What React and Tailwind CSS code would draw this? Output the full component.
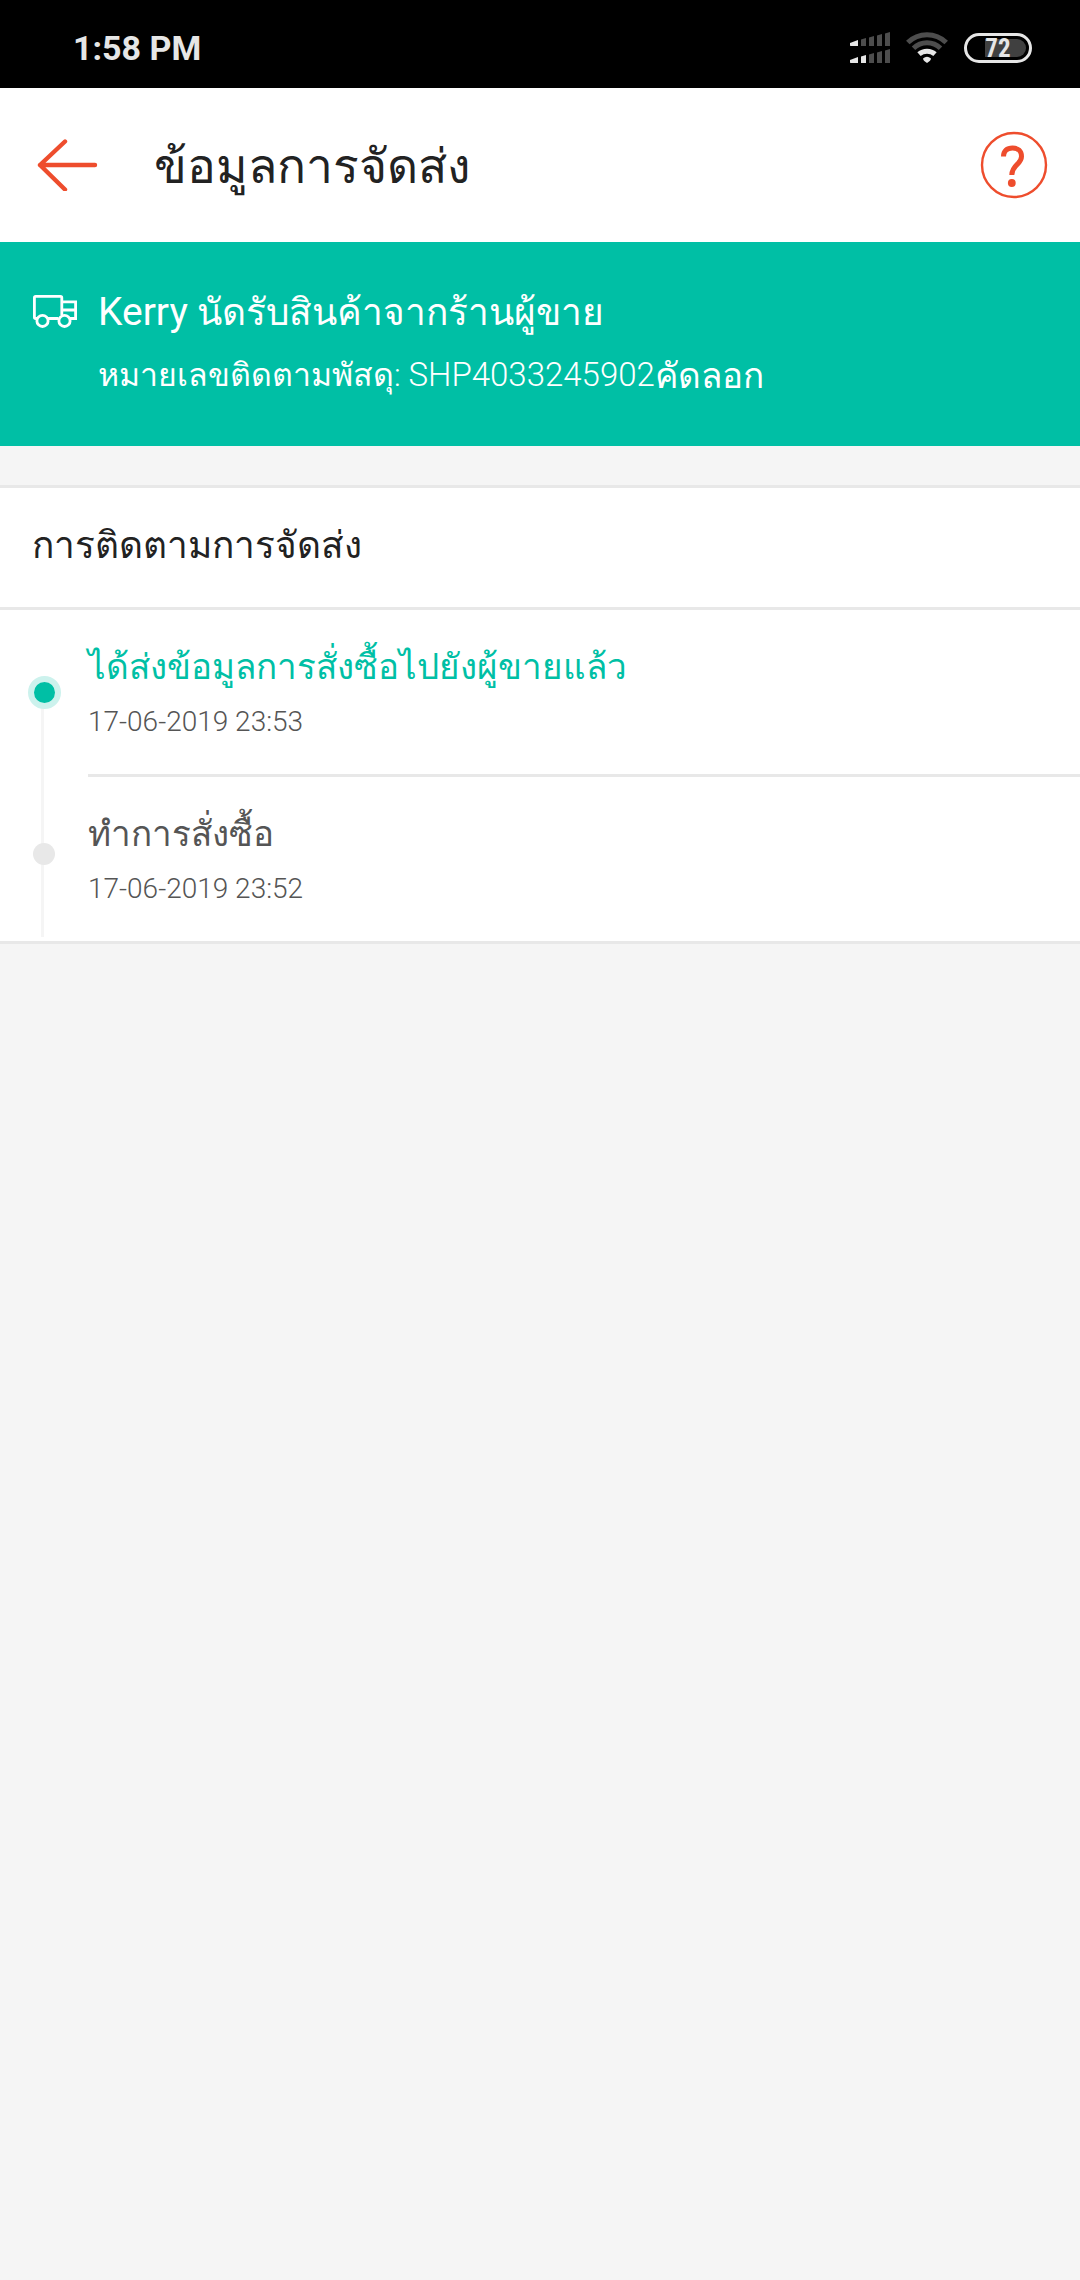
const events = [
  { title: 'ได้ส่งข้อมูลการสั่งซื้อไปยังผู้ขายแล้ว', time: '17-06-2019 23:53', current: true },
  { title: 'ทำการสั่งซื้อ', time: '17-06-2019 23:52', current: false },
];

function SignalIcon() {
  return (
    <svg width="40" height="32" viewBox="0 0 40 32" fill="#4d4d4d" aria-hidden="true">
      <path d="M0 11L8 8V14H0.500Q0 14 0 13Z" fill="#e6e6e6" />
      <path d="M11 7.500L16 6V14H11Z" />
      <path d="M19 5.500L24 4V14H19Z" />
      <path d="M27 3.500L32 2V14H27Z" />
      <path d="M35 1.500L40 0V14H35Z" />
      <path d="M0 28L8 25V31H0.500Q0 31 0 30Z" fill="#e6e6e6" />
      <path d="M11 24.500L16 23V31H11Z" fill="#e6e6e6" />
      <path d="M19 22.500L24 21V31H19Z" />
      <path d="M27 20.500L32 19V31H27Z" />
      <path d="M35 18.500L40 17V31H35Z" />
    </svg>
  );
}

function WifiIcon() {
  return (
    <svg width="42" height="32" viewBox="0 0 42 32" fill="none" strokeWidth="5" aria-hidden="true">
      <path d="M1.800 10.500A27.500 27.500 0 0 1 40.200 10.500" stroke="#4d4d4d" />
      <path d="M7.500 16.300A19.500 19.500 0 0 1 34.500 16.300" stroke="#4d4d4d" />
      <path d="M13 22.200A12 12 0 0 1 29 22.200" stroke="#e6e6e6" />
      <path d="M17 26.500Q21 22.800 25 26.500Q25 28.500 21 31Q17 28.500 17 26.500Z" fill="#e6e6e6" />
    </svg>
  );
}

function TruckIcon() {
  return (
    <svg width="46" height="34" viewBox="0 0 46 34" fill="none" stroke="#fff" strokeWidth="2.800" className="shrink-0" aria-hidden="true">
      <path d="M5 23.500H3.700Q2.400 23.500 2.400 22.200V2.700Q2.400 1.400 3.700 1.400H28.500Q29.800 1.400 29.800 2.700V20M16 23.500H26.500" />
      <path d="M30 6.900H43.600V23.500H38M30 15H43.600" />
      <circle cx="10.500" cy="25.900" r="5.600" />
      <circle cx="32.500" cy="25.900" r="5.600" />
    </svg>
  );
}

function StatusBar() {
  return (
    <div className="flex h-22 items-center justify-between bg-black pr-12 pl-[73px] pt-2">
      <span className="text-[34px] leading-10 font-bold text-[#e6e6e6]">1:58 PM</span>
      <div className="flex items-center gap-4">
        <SignalIcon />
        <WifiIcon />
        <div className="flex h-[30px] w-[68px] items-center justify-center rounded-full border-3 border-[#e6e6e6] p-[3px]">
          <div className="flex h-full w-full items-center justify-center rounded-full bg-linear-to-r from-black from-27% to-[#404040] to-27%">
            <span className="font-['Roboto_Condensed',Roboto,sans-serif] text-[25px] leading-none font-bold text-[#e6e6e6]">72</span>
          </div>
        </div>
      </div>
    </div>
  );
}

function Header() {
  return (
    <header className="flex h-[154px] items-center bg-white pr-8 pl-9">
      <button type="button" aria-label="ย้อนกลับ">
        <svg width="62" height="52" viewBox="0 0 62 52" fill="none" stroke="#ee4d2d" strokeWidth="4.400" strokeLinecap="round" strokeLinejoin="round">
          <path d="M59 26H4M29 2.500L4 26L29 50.500" />
        </svg>
      </button>
      <h1 className="ml-14 flex-1 pt-1 text-[48px] leading-16 text-[#222]">ข้อมูลการจัดส่ง</h1>
      <button type="button" aria-label="ช่วยเหลือ">
        <svg width="68" height="68" viewBox="0 0 68 68" fill="none" stroke="#ee4d2d">
          <circle cx="34" cy="34" r="32" strokeWidth="2.400" />
          <path d="M23.500 25.500C23.500 20 27 17 32.500 17C38 17 41.500 20 41.500 25.500C41.500 33.500 32 33.500 31.800 44" strokeWidth="5" />
          <circle cx="31.800" cy="52" r="3.900" fill="#ee4d2d" stroke="none" />
        </svg>
      </button>
    </header>
  );
}

function CarrierBanner() {
  return (
    <section className="flex h-[204px] items-start gap-5 bg-[#00bfa5] px-8 pt-10 text-white">
      <div className="flex h-15 items-center">
        <TruckIcon />
      </div>
      <div>
        <h2 className="text-[37px] leading-15">
          <span className="text-[39px]">Kerry</span> นัดรับสินค้าจากร้านผู้ขาย
        </h2>
        <p className="flex leading-16 font-light">
          <span className="text-[32px]">
            หมายเลขติดตามพัสดุ: <span className="text-[33px]">SHP4033245902</span>
          </span>
          <button type="button" className="pt-0.5 text-[35px] font-normal">คัดลอก</button>
        </p>
      </div>
    </section>
  );
}

function TimelineItem({ event, last }) {
  return (
    <li className="flex">
      <div className="relative w-22 shrink-0 pl-[41px]">
        <div className={`flex h-full flex-col ${event.current ? 'pt-20' : ''} ${last ? 'pb-1' : ''}`}>
          <span className="w-[3px] flex-1 bg-[#f5f5f5]" />
        </div>
        {event.current ? (
          <span className="absolute top-[66px] left-7 size-[33px] rounded-full border-6 border-[#ccf2ed] bg-[#00bfa5]" />
        ) : (
          <span className="absolute top-[66px] left-[33px] size-[22px] rounded-full bg-[#e8e8e8]" />
        )}
      </div>
      <div className={`flex-1 pt-7 pb-7 ${last ? '' : 'border-b-3 border-[#e8e8e8]'}`}>
        <h3 className={`text-[35px] leading-15 ${event.current ? 'text-[#00bfa5]' : 'text-[#555]'}`}>{event.title}</h3>
        <time className="block text-[28px] leading-12 font-light text-[#555]">{event.time}</time>
      </div>
    </li>
  );
}

export default function App() {
  return (
    <main className="min-h-screen bg-[#f5f5f5] font-[Roboto,sans-serif]">
      <StatusBar />
      <Header />
      <CarrierBanner />
      <section className="mt-[39px] border-y-3 border-[#e8e8e8] bg-white">
        <h2 className="border-b-3 border-[#e8e8e8] px-8 pt-[26px] pb-[29px] text-[37px] leading-16 text-[#222]">การติดตามการจัดส่ง</h2>
        <ul>
          {events.map((event, index) => (
            <TimelineItem key={event.time} event={event} last={index === events.length - 1} />
          ))}
        </ul>
      </section>
    </main>
  );
}
